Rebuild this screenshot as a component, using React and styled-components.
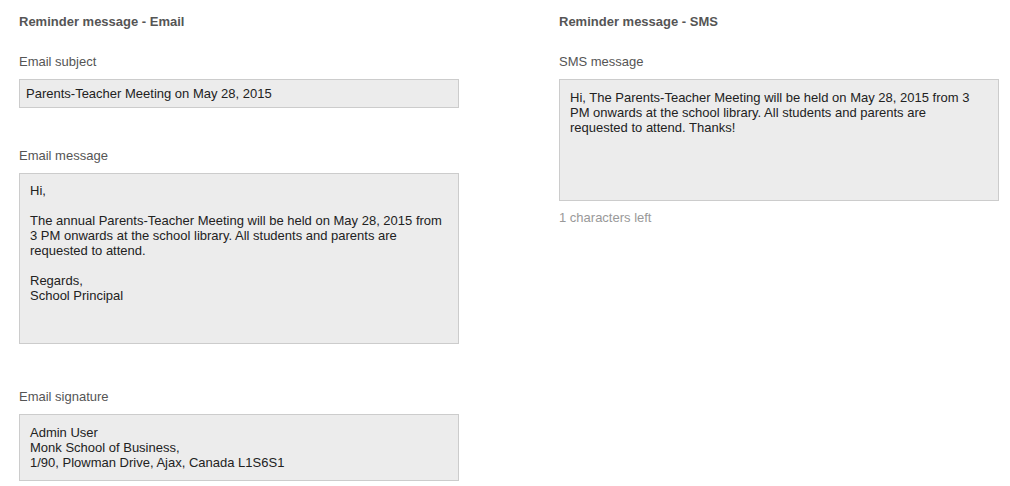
import styled, { createGlobalStyle } from "styled-components";

const Global = createGlobalStyle`
  html, body {
    margin: 0;
    padding: 0;
    background: #fff;
    font-family: "Liberation Sans", Arial, sans-serif;
    font-size: 13px;
    line-height: 15px;
  }
`;

const S = {
  Page: styled.div`
    display: flex;
    gap: 100px;
    padding: 14px 0 0 19px;
    box-sizing: border-box;
    width: 1010px;
    height: 486px;
    overflow: hidden;
  `,
  Column: styled.div`
    display: flex;
    flex-direction: column;
    flex: 0 0 440px;
    width: 440px;
  `,
  Heading: styled.h3`
    margin: 0 0 25px;
    font-size: 13px;
    line-height: 15px;
    font-weight: bold;
    color: #555;
  `,
  Field: styled.div`
    display: flex;
    flex-direction: column;
    margin-bottom: ${(p) => p.$gap || 0}px;
  `,
  Label: styled.div`
    color: #555;
    margin-bottom: ${(p) => p.$gap ?? 10}px;
  `,
  Box: styled.div`
    box-sizing: border-box;
    height: ${(p) => p.$height}px;
    padding: ${(p) => p.$pad};
    background: #ececec;
    border: 1px solid #ccc;
    color: #222;
    white-space: pre-line;
  `,
  Hint: styled.div`
    margin-top: 9px;
    color: #999;
  `,
};

const App = () => {
  return (
    <>
      <Global />
      <S.Page>
        <S.Column>
          <S.Heading>Reminder message - Email</S.Heading>
          <S.Field $gap={40}>
            <S.Label>Email subject</S.Label>
            <S.Box $height={29} $pad="6px 6px 0">
              Parents-Teacher Meeting on May 28, 2015
            </S.Box>
          </S.Field>
          <S.Field $gap={45}>
            <S.Label $gap={10}>Email message</S.Label>
            <S.Box $height={171} $pad="9px 10px">
              {"Hi,\n\nThe annual Parents-Teacher Meeting will be held on May 28, 2015 from 3 PM onwards at the school library. All students and parents are requested to attend.\n\nRegards,\nSchool Principal"}
            </S.Box>
          </S.Field>
          <S.Field>
            <S.Label>Email signature</S.Label>
            <S.Box $height={67} $pad="10px 10px">
              {"Admin User\nMonk School of Business,\n1/90, Plowman Drive, Ajax, Canada L1S6S1"}
            </S.Box>
          </S.Field>
        </S.Column>
        <S.Column>
          <S.Heading>Reminder message - SMS</S.Heading>
          <S.Field>
            <S.Label>SMS message</S.Label>
            <S.Box $height={122} $pad="10px 20px 10px 10px">
              Hi, The Parents-Teacher Meeting will be held on May 28, 2015 from 3 PM onwards at the school library. All students and parents are requested to attend. Thanks!
            </S.Box>
            <S.Hint>1 characters left</S.Hint>
          </S.Field>
        </S.Column>
      </S.Page>
    </>
  );
};

export default App;
